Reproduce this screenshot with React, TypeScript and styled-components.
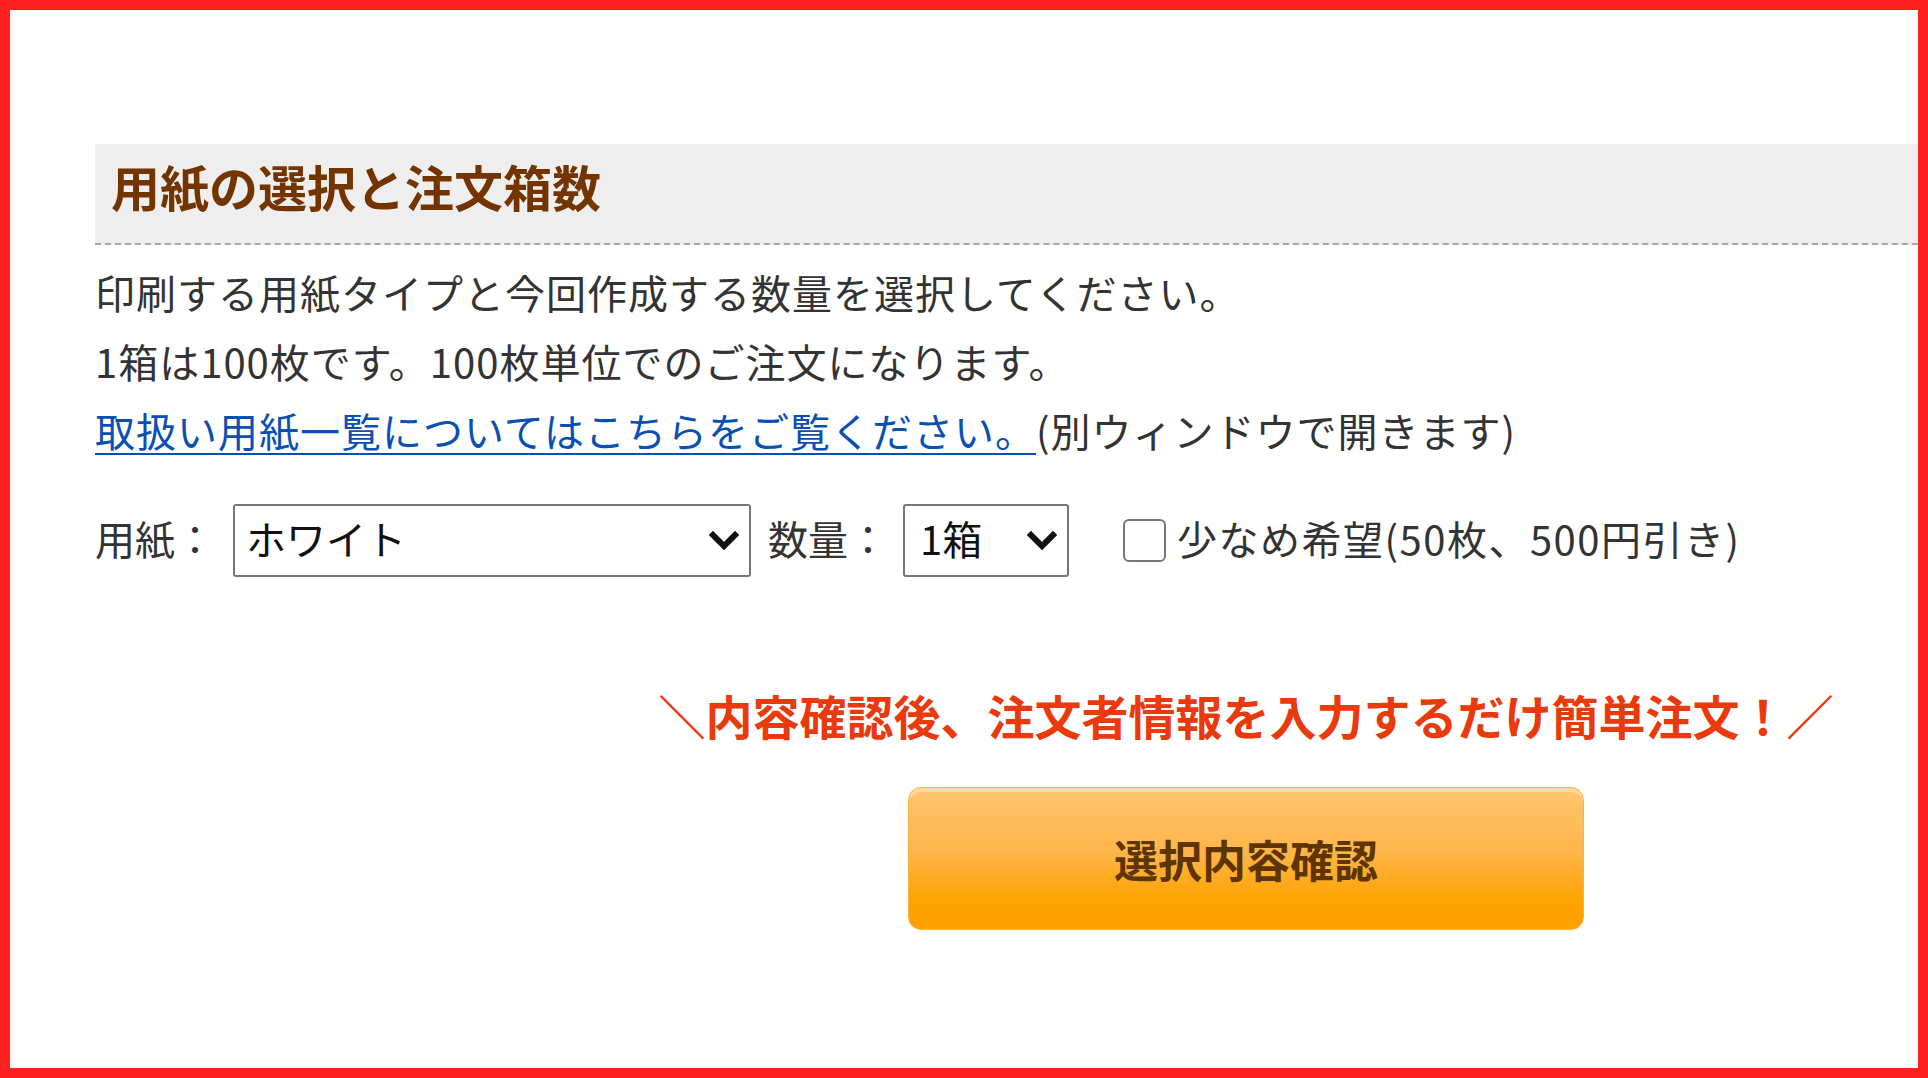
import React from 'react';
import styled, { createGlobalStyle } from 'styled-components';

const GlobalStyle = createGlobalStyle`
  html, body {
    margin: 0;
    padding: 0;
    background: #fff;
  }
  * {
    box-sizing: border-box;
  }
`;

const Frame = styled.div`
  width: 1928px;
  height: 1078px;
  border: 10px solid #ff2020;
  overflow: hidden;
  padding: 134px 0 0 85px;
  background: #fff;
`;

const Content = styled.div`
  width: 2302px;
  font-family: 'Noto Sans CJK JP', 'Noto Sans', sans-serif;
  font-size: 40px;
  color: #333;
`;

const SectionTitle = styled.h2`
  margin: 0;
  height: 101px;
  padding-left: 16px;
  background: #eeeeee;
  border-bottom: 2px dashed #a9a9a9;
  font-size: 49px;
  font-weight: 700;
  line-height: 84px;
  color: #733400;
`;

const Lead = styled.div`
  margin-top: 13px;
  letter-spacing: 1px;
`;

const Line = styled.p`
  margin: 0;
  line-height: 69px;
  white-space: nowrap;
`;

const Link = styled.a`
  color: #0a50b4;
  text-decoration: underline;
  text-underline-offset: 6px;
  text-decoration-thickness: 2px;
`;

const OptionsRow = styled.div`
  display: flex;
  align-items: center;
  margin-top: 39px;
  height: 73px;
`;

const FieldLabel = styled.label<{ $gap?: number }>`
  margin-left: ${p => p.$gap ?? 0}px;
  padding-bottom: 6px;
  line-height: 1;
  white-space: nowrap;
`;

const SelectWrap = styled.div<{ $width: number; $gap: number }>`
  position: relative;
  width: ${p => p.$width}px;
  height: 73px;
  margin-left: ${p => p.$gap}px;
`;

const Select = styled.select<{ $padLeft: number }>`
  appearance: none;
  width: 100%;
  height: 100%;
  padding: 0 50px 6px ${p => p.$padLeft}px;
  border: 2px solid #767676;
  border-radius: 3px;
  background: #fff;
  font-family: inherit;
  font-size: 40px;
  color: #111;
`;

const Chevron = styled.svg`
  position: absolute;
  top: 50%;
  right: 12px;
  width: 30px;
  height: 20px;
  transform: translateY(-50%);
  pointer-events: none;
`;

const CheckLabel = styled.label`
  display: flex;
  align-items: center;
  margin-left: 54px;
  white-space: nowrap;
  line-height: 1;
  letter-spacing: 1.5px;
`;

const CheckText = styled.span`
  padding-bottom: 6px;
`;

const CheckBox = styled.input`
  appearance: none;
  width: 43px;
  height: 43px;
  margin: 0 11px 0 0;
  border: 2px solid #767676;
  border-radius: 6px;
  background: #fff;
`;

const Promo = styled.p`
  margin: 108px 0 0;
  text-align: center;
  font-size: 47px;
  font-weight: 700;
  line-height: 60px;
  color: #ea3a0c;
  white-space: nowrap;
`;

const ConfirmButton = styled.button`
  display: block;
  width: 676px;
  height: 143px;
  margin: 42px auto 0;
  border: 1px solid #ffb23a;
  border-radius: 13px;
  background: linear-gradient(to bottom, #ffc670 0%, #ffb54a 45%, #ffa300 80%, #ffa000 100%);
  box-shadow: inset 0 4px 0 rgba(255, 255, 255, 0.35);
  font-family: inherit;
  font-size: 44px;
  font-weight: 700;
  color: #5e3500;
  cursor: pointer;
`;

const ChevronIcon = () => (
  <Chevron viewBox="0 0 30 20">
    <polyline points="4,4 15,15 26,4" fill="none" stroke="#111" strokeWidth="6" strokeLinecap="square" />
  </Chevron>
);

export default function App() {
  return (
    <>
      <GlobalStyle />
      <Frame>
        <Content>
          <SectionTitle>用紙の選択と注文箱数</SectionTitle>

          <Lead>
            <Line>印刷する用紙タイプと今回作成する数量を選択してください。</Line>
            <Line>1箱は100枚です。100枚単位でのご注文になります。</Line>
            <Line>
              <Link href="#">取扱い用紙一覧についてはこちらをご覧ください。</Link>(別ウィンドウで開きます)
            </Line>
          </Lead>

          <OptionsRow>
            <FieldLabel htmlFor="paper">用紙：</FieldLabel>
            <SelectWrap $width={518} $gap={18}>
              <Select id="paper" $padLeft={11} defaultValue="white">
                <option value="white">ホワイト</option>
                <option value="cream">クリーム</option>
              </Select>
              <ChevronIcon />
            </SelectWrap>

            <FieldLabel htmlFor="qty" $gap={17}>数量：</FieldLabel>
            <SelectWrap $width={166} $gap={15}>
              <Select id="qty" $padLeft={15} defaultValue="1">
                <option value="1">1箱</option>
                <option value="2">2箱</option>
                <option value="3">3箱</option>
              </Select>
              <ChevronIcon />
            </SelectWrap>

            <CheckLabel>
              <CheckBox type="checkbox" />
              <CheckText>少なめ希望(50枚、500円引き)</CheckText>
            </CheckLabel>
          </OptionsRow>

          <Promo>＼内容確認後、注文者情報を入力するだけ簡単注文！／</Promo>

          <ConfirmButton type="button">選択内容確認</ConfirmButton>
        </Content>
      </Frame>
    </>
  );
}
